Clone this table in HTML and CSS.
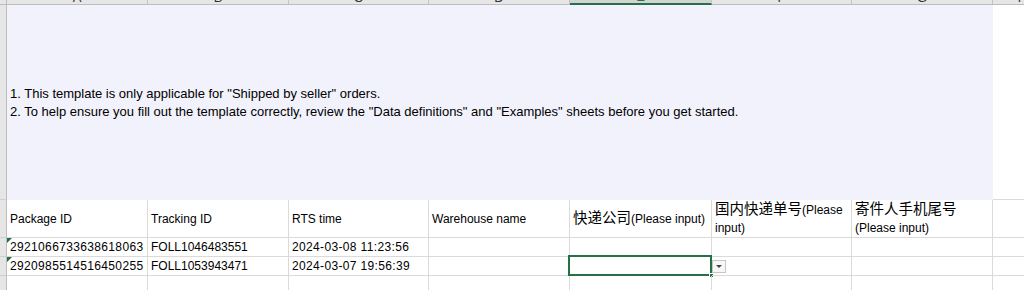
FILE: index.html
```html
<!DOCTYPE html>
<html>
<head>
<meta charset="utf-8">
<link rel="stylesheet" href="styles.css">
</head>
<body>
<div class="sheet">
  <div class="corner"></div>
  <div class="colhead"><span>A</span></div>
  <div class="colhead"><span>B</span></div>
  <div class="colhead"><span>C</span></div>
  <div class="colhead"><span>D</span></div>
  <div class="colhead sel"><span>E</span></div>
  <div class="colhead"><span>F</span></div>
  <div class="colhead"><span>G</span></div>
  <div class="colhead"><span>H</span></div>

  <div class="rowhead"></div>
  <div class="cell notes">
    <div>1. This template is only applicable for "Shipped by seller" orders.</div>
    <div>2. To help ensure you fill out the template correctly, review the "Data definitions" and "Examples" sheets before you get started.</div>
  </div>
  <div class="cell"></div>

  <div class="rowhead"></div>
  <div class="cell head">Package ID</div>
  <div class="cell head">Tracking ID</div>
  <div class="cell head">RTS time</div>
  <div class="cell head">Warehouse name</div>
  <div class="cell head"><div class="wrap"><span class="cjk">快递公司</span>(Please input)</div></div>
  <div class="cell head"><div class="wrap"><span class="cjk">国内快递单号</span>(Please input)</div></div>
  <div class="cell head"><div class="wrap"><span class="cjk">寄件人手机尾号</span>(Please input)</div></div>
  <div class="cell"></div>

  <div class="rowhead"></div>
  <div class="cell num flag">2921066733638618063</div>
  <div class="cell">FOLL1046483551</div>
  <div class="cell num">2024-03-08 11:23:56</div>
  <div class="cell"></div>
  <div class="cell"></div>
  <div class="cell"></div>
  <div class="cell"></div>
  <div class="cell"></div>

  <div class="rowhead"></div>
  <div class="cell num flag">2920985514516450255</div>
  <div class="cell">FOLL1053943471</div>
  <div class="cell num">2024-03-07 19:56:39</div>
  <div class="cell"></div>
  <div class="cell active">
    <div class="selection"><i class="handle"></i></div>
    <div class="dropdown"><i class="caret"></i></div>
  </div>
  <div class="cell"></div>
  <div class="cell"></div>
  <div class="cell"></div>

  <div class="rowhead"></div>
  <div class="cell"></div>
  <div class="cell"></div>
  <div class="cell"></div>
  <div class="cell"></div>
  <div class="cell"></div>
  <div class="cell"></div>
  <div class="cell"></div>
  <div class="cell"></div>
</div>
</body>
</html>
```

FILE: styles.css
```css
html, body {
  margin: 0;
  padding: 0;
  background: #ffffff;
  overflow: hidden;
}

.sheet {
  display: grid;
  grid-template-columns: 7px 141px 141px 140px 141px 142px 140px 141px 60px;
  grid-template-rows: 5px 195px 38px 19px 19px 19px;
  width: 1053px;
  font-family: "Liberation Sans", Arial, sans-serif;
  font-size: 12px;
  color: #000000;
}

.corner {
  background: #e6e6e6;
  border-right: 1px solid #bdbdbd;
  border-bottom: 1px solid #bdbdbd;
  box-sizing: border-box;
}

.colhead {
  background: #e6e6e6;
  border-right: 1px solid #c4c4c4;
  border-bottom: 1px solid #bdbdbd;
  box-sizing: border-box;
  overflow: hidden;
  display: flex;
  align-items: flex-end;
  justify-content: center;
  color: #333333;
}

.colhead span {
  font-size: 13px;
  line-height: 13px;
}

.colhead.sel {
  background: #d3d3d3;
  border-bottom: 2px solid #217346;
  color: #217346;
}

.rowhead {
  background: #e6e6e6;
  border-right: 1px solid #bdbdbd;
  border-bottom: 1px solid #cfcfcf;
  box-sizing: border-box;
}

.cell {
  box-sizing: border-box;
  border-right: 1px solid #dadada;
  border-bottom: 1px solid #dadada;
  padding: 0 3px;
  display: flex;
  align-items: center;
  white-space: nowrap;
  position: relative;
}

.notes {
  grid-column: 2 / 9;
  background: #f2f2fc;
  border: none;
  flex-direction: column;
  align-items: flex-start;
  justify-content: center;
  font-size: 13px;
  line-height: 18px;
  padding-top: 1px;
}

.head {
  white-space: normal;
  line-height: 18px;
}

.wrap {
  line-height: 18px;
}

.cjk {
  font-family: "Noto Sans CJK SC", "Liberation Sans", sans-serif;
  font-size: 14.5px;
  line-height: 1;
}

.num {
  letter-spacing: 0.35px;
}

.flag::before {
  content: "";
  position: absolute;
  left: 0;
  top: 0;
  border-top: 5px solid #1e7145;
  border-right: 5px solid transparent;
}

.selection {
  position: absolute;
  left: -2px;
  top: -2px;
  right: -1px;
  bottom: -1px;
  border: 2px solid #217346;
}

.handle {
  position: absolute;
  right: -4px;
  bottom: -4px;
  width: 5px;
  height: 5px;
  background: #217346;
  border: 1px solid #ffffff;
  box-sizing: border-box;
}

.dropdown {
  position: absolute;
  left: calc(100% + 1px);
  top: 3px;
  width: 14px;
  height: 13px;
  box-sizing: border-box;
  border: 1px solid #c6c6c6;
  background: #f7f7f7;
  display: flex;
  align-items: center;
  justify-content: center;
}

.caret {
  width: 0;
  height: 0;
  border-left: 3px solid transparent;
  border-right: 3px solid transparent;
  border-top: 3px solid #444444;
}
```
